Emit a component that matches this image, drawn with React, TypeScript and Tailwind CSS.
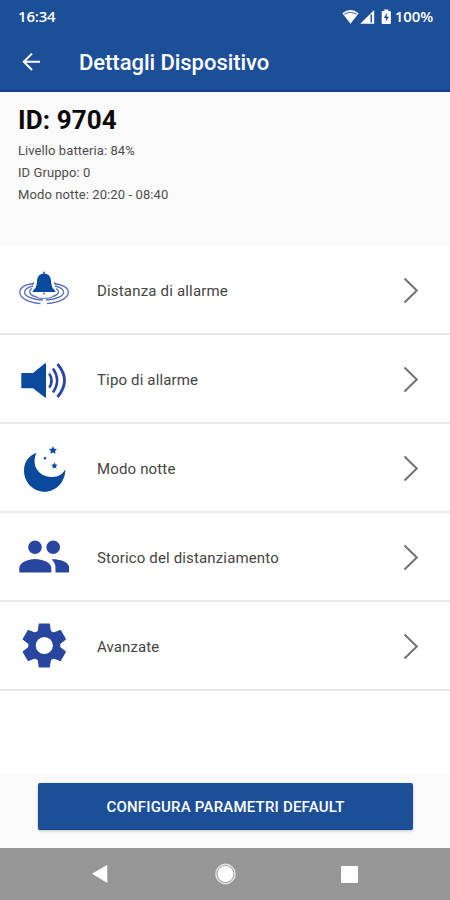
import React from "react";

const BLUE = "#0a4a9c";
const INDIGO = "#2845a0";

function BellIcon() {
  return (
    <svg width="50" height="51" viewBox="19 265 50 51" fill="none">
      <g stroke="#5a6fba" strokeWidth="1.3">
        <path d="M34 283.5C25 284.5 19.8 288 19.8 292.3C19.8 298 28 302.5 40.5 303.6" />
        <path d="M54 283.5C63 284.5 68.3 288 68.3 292.3C68.3 298 60 302.5 47 303.6" />
        <path d="M33 286C27.5 287.3 24.6 289.3 24.6 292.2C24.6 296 32 299.8 43 300" />
        <path d="M55 286C60.5 287.3 63.6 289.3 63.6 292.2C63.6 296 56 299.8 46 300" />
        <path d="M32 288.5C27.5 291.5 30 295.5 37 297" />
        <path d="M56 288.5C60.5 291.5 58.5 295 52 296.7" />
        <path d="M37 297.6C41 298.6 48 298.6 52 297.4" strokeWidth="1" />
        <path d="M34 282.5L32 284.5M54 282.5L56.5 284.5" />
      </g>
      <circle cx="44" cy="272.7" r="1.2" fill="#5a6fba" />
      <path
        d="M44 273.8C48.5 273.8 50.6 276.3 51 280.5C51.4 285.5 52 288 55.3 290.8V291.9H32.8V290.8C36 288 36.8 285.5 37.1 280.5C37.5 276.3 39.6 273.8 44 273.8Z"
        fill={BLUE}
      />
      <path d="M42.6 292.8H45.4L44 295Z" fill="#5a6fba" />
    </svg>
  );
}

function SpeakerIcon() {
  return (
    <svg width="50" height="51" viewBox="19 354 50 51" fill="none">
      <path d="M22 373H33L45 363.3Q46 363 46 364V397Q46 398 45 397.6L33 388.3H22Q21.3 388.3 21.3 387.6V373.7Q21.3 373 22 373Z" fill={BLUE} />
      <g stroke={INDIGO} strokeWidth="2.5">
        <path d="M49.2 373.6Q54 380.5 49.2 387.6" />
        <path d="M53 368.5Q61.3 380.5 53 392.5" />
        <path d="M57.5 364Q71.5 380.5 57.5 397" strokeWidth="2.8" />
      </g>
    </svg>
  );
}

function MoonIcon() {
  return (
    <svg width="50" height="51" viewBox="19 443 50 51">
      <path
        d="M36.8 452.8C28.5 455.5 24 462.5 24 470.5C24 482 33 491.8 44.5 491.8C56 491.8 65.5 482 65.3 469.3C62.5 474.5 58 477 52 477C43 477 35 471 34.6 462.5C34.4 458.5 35 455.5 36.8 452.8Z"
        fill={BLUE}
      />
      <path d="M53 446.2L54.2 448.7L57 449L55 451L55.5 453.8L53 452.5L50.4 453.8L50.9 451L48.9 449L51.8 448.7Z" fill={BLUE} />
      <path d="M54.5 462.5L55.5 464.5L57.6 464.8L56 466.3L56.4 468.5L54.5 467.4L52.4 468.5L52.8 466.3L51.2 464.8L53.5 464.5Z" fill={BLUE} />
      <circle cx="45" cy="458.3" r="1.3" fill={BLUE} />
    </svg>
  );
}

function PeopleIcon() {
  return (
    <svg width="50" height="51" viewBox="19 532 50 51" fill={INDIGO}>
      <circle cx="35" cy="547.3" r="6.8" />
      <circle cx="53.2" cy="547.3" r="6.8" />
      <path d="M19.3 572.5V568C19.3 562.5 28 559 35 559C42.5 559 51.3 562.5 51.3 568V572.5Z" />
      <path d="M51.5 559.2C60 558.8 69.3 562 69.3 568V572.5H55.5V568C55.5 564 54 561.5 51.5 559.2Z" />
    </svg>
  );
}

function GearIcon() {
  const tooth = "M-5 -22H5Q5.5 -22 5.6 -21.4L6.8 -13V13L5.6 21.4Q5.5 22 5 22H-5Q-5.5 22 -5.6 21.4L-6.8 13V-13L-5.6 -21.4Q-5.5 -22 -5 -22Z";
  return (
    <svg width="50" height="51" viewBox="19 621 50 51">
      <g transform="translate(44.3 645.5)" fill={INDIGO}>
        <circle r="16" />
        <path d={tooth} />
        <path d={tooth} transform="rotate(60)" />
        <path d={tooth} transform="rotate(120)" />
        <circle r="8.6" fill="#fff" />
      </g>
    </svg>
  );
}

const rows = [
  { label: "Distanza di allarme", icon: <BellIcon />, tracking: "tracking-[0.18px]" },
  { label: "Tipo di allarme", icon: <SpeakerIcon />, tracking: "tracking-[0.15px]" },
  { label: "Modo notte", icon: <MoonIcon />, tracking: "tracking-[0.15px]" },
  { label: "Storico del distanziamento", icon: <PeopleIcon />, tracking: "tracking-[0.15px]" },
  { label: "Avanzate", icon: <GearIcon />, tracking: "tracking-[0.1px]" },
];

export default function App() {
  return (
    <div className="flex h-[900px] w-[450px] flex-col overflow-hidden bg-white font-[Roboto,sans-serif]">
      <header className="h-[92px] border-b-2 border-[#174489] bg-[#1d4f99] text-white">
        <div className="flex h-[33px] items-center justify-between pl-[18px] pr-[17px]">
          <span className="font-['Open_Sans',sans-serif] text-[15px] font-semibold leading-none tracking-[-0.2px]">16:34</span>
          <div className="flex items-center">
            <svg width="49" height="16" viewBox="341 8 49 16">
              <path d="M341.3 12.3Q349.5 5.5 357.7 12.3L349.5 22.8Z" fill="#fff" />
              <path d="M343.2 13.3Q349.5 9.3 355.8 13.3" stroke="#6487ba" strokeWidth="1.3" fill="none" />
              <path d="M373.2 9V22.8H359.2Z" fill="#fff" />
              <path d="M370.3 13.5V21.5" stroke="#1d4f99" strokeWidth="1.5" />
              <path d="M383.3 8.5H387.3V10H388.8Q389.9 10 389.9 11V22Q389.9 23 388.8 23H381.8Q380.7 23 380.7 22V11Q380.7 10 381.8 10H383.3Z" fill="#fff" />
              <path d="M386 12L382.8 17H385L384.6 20.8L387.9 15.8H385.7Z" fill="#1d4f99" />
            </svg>
            <span className="ml-[4px] font-['Open_Sans',sans-serif] text-[15px] font-semibold leading-none tracking-[-0.1px]">100%</span>
          </div>
        </div>
        <div className="flex h-[58px] items-center pl-[22px]">
          <svg width="20" height="20" viewBox="0 0 20 20" fill="none" stroke="#fff" strokeWidth="2">
            <path d="M18 9.8H2M10 1.6L1.8 9.8L10 18" />
          </svg>
          <h1 className="ml-[37px] whitespace-nowrap pt-[2px] text-[22px] font-medium leading-none tracking-[-0.04px]">Dettagli Dispositivo</h1>
        </div>
      </header>

      <section className="h-[153px] bg-[#fafafa] pl-[18px] pt-[12px]">
        <h2 className="text-[26px] font-bold leading-[32px] tracking-[0.1px] text-[#090909]">ID: 9704</h2>
        <div className="mt-[4px] text-[13px] leading-[22px] text-[#4d4d4d]">
          <p className="tracking-[0.08px]">Livello batteria: 84%</p>
          <p className="tracking-[0.08px]">ID Gruppo: 0</p>
          <p className="tracking-[0.1px]">Modo notte: 20:20 - 08:40</p>
        </div>
      </section>

      <main className="h-[530px] bg-white pt-px">
        {rows.map((row) => (
          <div key={row.label} className="flex h-[89px] items-center border-b-2 border-[#eaeaea] pl-[19px] pr-[31px] pt-[2px]">
            {row.icon}
            <span className={`ml-[28px] flex-1 pt-[2px] text-[15px] leading-none text-[#444] ${row.tracking}`}>{row.label}</span>
            <svg width="16" height="27" viewBox="0 0 16 27" fill="none" stroke="#727272" strokeWidth="2">
              <path d="M1.5 1.5L13.8 13.5L1.5 25.5" />
            </svg>
          </div>
        ))}
      </main>

      <div className="flex h-[73px] items-start bg-[#fafafa] pl-[38px] pt-[8px]">
        <button className="h-[47px] w-[375px] rounded-[2px] border-b border-[#15458c] bg-[#1d4f99] pt-[2px] text-[15px] font-medium tracking-[0.2px] text-white shadow-[0_1px_3px_rgba(0,0,0,0.22)]">
          CONFIGURA PARAMETRI DEFAULT
        </button>
      </div>

      <nav className="flex h-[52px] items-center bg-[#969696] pl-[91px]">
        <svg width="17" height="20" viewBox="0 0 17 20" fill="#fff">
          <path d="M1 9.7L15.5 1.2Q16.3 1 16.3 1.8V18Q16.3 18.8 15.5 18.4Z" />
        </svg>
        <svg className="ml-[107px]" width="22" height="22" viewBox="0 0 22 22">
          <circle cx="10.5" cy="11" r="9.6" fill="#969696" stroke="#dedede" strokeWidth="1.6" />
          <circle cx="10.5" cy="11" r="8" fill="#fff" />
        </svg>
        <div className="ml-[104px] h-[17px] w-[17px] rounded-[1px] bg-white" />
      </nav>
    </div>
  );
}
